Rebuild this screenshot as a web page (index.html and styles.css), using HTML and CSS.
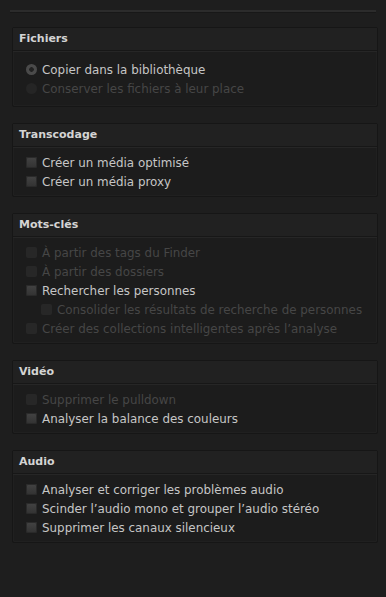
FILE: index.html
```html
<!DOCTYPE html>
<html lang="fr">
<head>
<meta charset="utf-8">
<link rel="stylesheet" href="styles.css">
</head>
<body>
<div class="panel">
  <div class="topline"></div>
  <div class="sections">
    <section class="box">
      <div class="head">Fichiers</div>
      <div class="body radios">
        <div class="row"><span class="radio on"></span><span class="label">Copier dans la bibliothèque</span></div>
        <div class="row off"><span class="radio"></span><span class="label">Conserver les fichiers à leur place</span></div>
      </div>
    </section>
    <section class="box">
      <div class="head">Transcodage</div>
      <div class="body">
        <div class="row"><span class="check"></span><span class="label">Créer un média optimisé</span></div>
        <div class="row"><span class="check"></span><span class="label">Créer un média proxy</span></div>
      </div>
    </section>
    <section class="box">
      <div class="head">Mots-clés</div>
      <div class="body">
        <div class="row off"><span class="check"></span><span class="label">À partir des tags du Finder</span></div>
        <div class="row off"><span class="check"></span><span class="label">À partir des dossiers</span></div>
        <div class="row"><span class="check"></span><span class="label">Rechercher les personnes</span></div>
        <div class="row off nested"><span class="check"></span><span class="label">Consolider les résultats de recherche de personnes</span></div>
        <div class="row off"><span class="check"></span><span class="label">Créer des collections intelligentes après l’analyse</span></div>
      </div>
    </section>
    <section class="box">
      <div class="head">Vidéo</div>
      <div class="body">
        <div class="row off"><span class="check"></span><span class="label">Supprimer le pulldown</span></div>
        <div class="row"><span class="check"></span><span class="label">Analyser la balance des couleurs</span></div>
      </div>
    </section>
    <section class="box">
      <div class="head">Audio</div>
      <div class="body">
        <div class="row"><span class="check"></span><span class="label">Analyser et corriger les problèmes audio</span></div>
        <div class="row"><span class="check"></span><span class="label">Scinder l’audio mono et grouper l’audio stéréo</span></div>
        <div class="row"><span class="check"></span><span class="label">Supprimer les canaux silencieux</span></div>
      </div>
    </section>
  </div>
</div>
</body>
</html>
```
FILE: styles.css
```css
html, body {
  margin: 0;
  padding: 0;
  background: #1e1e1e;
  height: 100%;
}
body {
  font-family: "DejaVu Sans", "Liberation Sans", sans-serif;
  font-size: 11.9px;
  color: #c6c6c6;
}
.panel {
  padding: 10px 8px 0 10px;
}
.topline {
  height: 2px;
  width: 366px;
  background: #2c2c2c;
  border-bottom: 1px solid #181818;
}
.sections {
  margin-top: 14px;
  padding-left: 2px;
  display: flex;
  flex-direction: column;
  gap: 16px;
}
.box {
  width: 364px;
  border: 1px solid #161616;
  border-radius: 2px;
  background: #1c1c1c;
  box-shadow: inset 0 0 0 1px #202020;
}
.head {
  height: 22px;
  line-height: 22px;
  padding-left: 6px;
  font-weight: bold;
  font-size: 11px;
  color: #d4d4d4;
  background: #212121;
  border-bottom: 1px solid #171717;
  box-shadow: 0 1px 0 #262626;
}
.body {
  padding: 6px 0 5px 13px;
}
.body.radios {
  padding: 9px 0 8px 13px;
}
.row {
  height: 19px;
  display: flex;
  align-items: center;
  gap: 5px;
  white-space: nowrap;
}
.row.nested {
  padding-left: 15px;
}
.row.off .label {
  color: #464646;
}
.check {
  width: 11px;
  height: 11px;
  border-radius: 2px;
  background: linear-gradient(#434343, #323232);
  box-shadow: inset 0 0 0 1px #2a2a2a;
  flex: none;
}
.row.off .check {
  background: #272727;
  box-shadow: none;
}
.radio {
  width: 11px;
  height: 11px;
  border-radius: 50%;
  background: #2a2a2a;
  flex: none;
}
.radio.on {
  background: radial-gradient(circle, #222 0 2px, #4a4a4a 2.6px);
}
.row.off .radio {
  background: #252525;
}
```
